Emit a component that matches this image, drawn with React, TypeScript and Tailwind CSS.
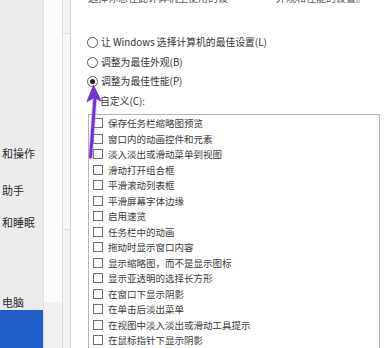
import React from "react";

const options = [
  { label: "让 Windows 选择计算机的最佳设置(L)", checked: false },
  { label: "调整为最佳外观(B)", checked: false },
  { label: "调整为最佳性能(P)", checked: true },
];

const effects = [
  "保存任务栏缩略图预览",
  "窗口内的动画控件和元素",
  "淡入淡出或滑动菜单到视图",
  "滑动打开组合框",
  "平滑滚动列表框",
  "平滑屏幕字体边缘",
  "启用速览",
  "任务栏中的动画",
  "拖动时显示窗口内容",
  "显示缩略图，而不是显示图标",
  "显示亚透明的选择长方形",
  "在窗口下显示阴影",
  "在单击后淡出菜单",
  "在视图中淡入淡出或滑动工具提示",
  "在鼠标指针下显示阴影",
];

const font = { fontFamily: '"Noto Sans CJK SC", "Noto Sans", sans-serif' };

function Sidebar() {
  return (
    <div className="w-[43px] h-full flex flex-col bg-[#ececec] text-[11px] leading-[14px] text-[#2b2b2b] shrink-0">
      <div className="h-[146px]" />
      <div className="pl-[2px] whitespace-nowrap">和操作</div>
      <div className="h-[23px]" />
      <div className="pl-[2px] whitespace-nowrap">助手</div>
      <div className="h-[18px]" />
      <div className="pl-[2px] whitespace-nowrap">和睡眠</div>
      <div className="h-[66px]" />
      <div className="pl-[2px] whitespace-nowrap">电脑</div>
      <div className="h-[1px]" />
      <div className="flex-1 bg-[#1d5ec9]" />
    </div>
  );
}

function MiddleStrip() {
  return (
    <div className="h-full flex shrink-0">
      <div className="w-[19px] h-full flex flex-col border-l border-[#e2e2e2] bg-[#fbfbfb]">
        <div className="h-[302px]" />
        <div className="flex-1 bg-[#f1f1f1]" />
      </div>
      <div className="w-[8px] h-full flex flex-col border-l border-[#dcdcdc] bg-[#f3f3f3]">
        <div className="h-[33px]" />
        <div className="h-[197px] border-t border-b border-[#dddddd] bg-[#f8f8f8]" />
        <div className="flex-1" />
      </div>
    </div>
  );
}

function Radio({ checked }: { checked: boolean }) {
  return (
    <span className="w-[11px] h-[11px] rounded-full border border-[#555] bg-white flex items-center justify-center shrink-0">
      {checked && <span className="w-[5px] h-[5px] rounded-full bg-[#222]" />}
    </span>
  );
}

function Dialog() {
  return (
    <div className="flex-1 h-full bg-white border-l border-[#cfcfcf] flex flex-col overflow-hidden">
      <div className="h-[12px] overflow-hidden relative">
        <div className="absolute top-[-8px] left-[17px] flex text-[10px] leading-[12px] text-[#555] whitespace-nowrap">
          <span>选择你想在此计算机上使用的设</span>
          <span className="ml-[48px]">外观和性能的设置。</span>
        </div>
      </div>
      <div className="h-[24px]" />
      <div className="flex flex-col pl-[16px] text-[9.8px] text-[#333]">
        {options.map((o) => (
          <div key={o.label} className="h-[19.5px] flex items-center gap-[3px] whitespace-nowrap">
            <Radio checked={o.checked} />
            <span>{o.label}</span>
          </div>
        ))}
        <div className="h-[19.5px] flex items-center pl-[13px] whitespace-nowrap">自定义(C):</div>
      </div>
      <div className="h-[3px]" />
      <div className="ml-[17px] mr-[4px] flex-1 border border-[#b4b4b4] border-b-0 pt-[1px] text-[9.5px] text-[#3a3a3a]">
        {effects.map((e) => (
          <div key={e} className="h-[15.5px] flex items-center pl-[4px] gap-[5px] whitespace-nowrap">
            <span className="w-[10px] h-[10px] border border-[#707070] bg-white shrink-0" />
            <span>{e}</span>
          </div>
        ))}
      </div>
    </div>
  );
}

function Arrow() {
  return (
    <svg className="absolute left-0 top-0 pointer-events-none" width="384" height="348">
      <path d="M95 97 L90.5 157" stroke="#b89be8" strokeWidth="5" strokeLinecap="round" opacity="0.5" />
      <path d="M95 97 L90.5 157" stroke="#6f32d0" strokeWidth="3" strokeLinecap="round" />
      <path d="M93.5 85.5 L87 101.5 L94.5 97.5 L101 101 Z" fill="#6f32d0" stroke="#6f32d0" strokeWidth="1" strokeLinejoin="round" />
    </svg>
  );
}

export default function App() {
  return (
    <div className="w-[384px] h-[348px] overflow-hidden relative flex bg-white" style={font}>
      <Sidebar />
      <MiddleStrip />
      <Dialog />
      <Arrow />
    </div>
  );
}
